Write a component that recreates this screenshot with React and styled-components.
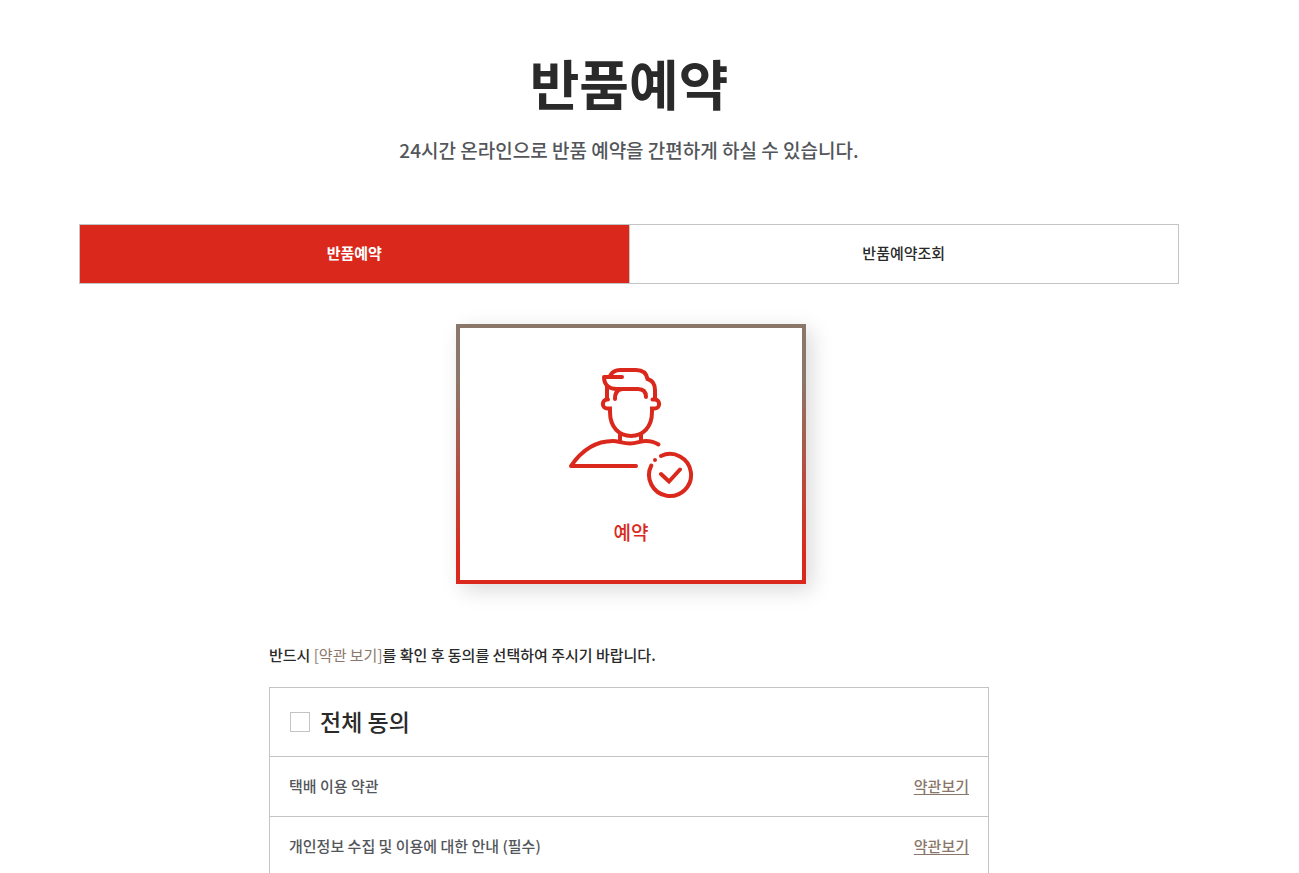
import React, { useState } from "react";
import styled, { createGlobalStyle } from "styled-components";

const red = "#da291c";
const brown = "#8b7769";
const line = "#c4c4c4";
const ink = "#2a2a2a";

const GlobalStyle = createGlobalStyle`
  *, *::before, *::after { box-sizing: border-box; }
  body {
    margin: 0;
    background: #fff;
    color: ${ink};
    font-family: "Noto Sans CJK KR", "Noto Sans", sans-serif;
    font-size: 15px;
    font-weight: 500;
    line-height: 24px;
  }
  h1, h2, p, ul { margin: 0; padding: 0; }
  button { font: inherit; cursor: pointer; }
`;

const Page = styled.main`
  padding: 43px 120px 0 79px;
`;

const Container = styled.div`
  max-width: 1100px;
  margin: 0 auto;
`;

const Heading = styled.header`
  text-align: center;
`;

const Title = styled.h1`
  font-size: 54px;
  font-weight: 700;
  line-height: 80px;
`;

const Lead = styled.p`
  margin-top: 11px;
  color: #53565a;
  font-size: 19px;
  line-height: 32px;
`;

const Tabs = styled.nav`
  display: flex;
  margin-top: 58px;
  border: 1px solid ${line};
`;

const Tab = styled.a`
  flex: 1;
  padding: 16px 0 18px;
  text-align: center;
  text-decoration: none;
  color: ${(p) => (p.$active ? "#fff" : ink)};
  background: ${(p) => (p.$active ? red : "#fff")};
  font-weight: ${(p) => (p.$active ? 700 : 500)};

  & + & { border-left: 1px solid ${line}; }
`;

const Choice = styled.div`
  display: flex;
  justify-content: center;
  padding: 40px 0 0 4px;
`;

const ChoiceCard = styled.button`
  display: flex;
  flex-direction: column;
  align-items: center;
  gap: 16px;
  width: 350px;
  height: 260px;
  padding: 38px 0 0;
  border: 4px solid;
  border-image: linear-gradient(${brown} 20%, ${red} 90%) 1;
  background: #fff;
  box-shadow: 6px 6px 20px rgba(0, 0, 0, 0.15);
  color: ${red};
  font-size: 19px;
  line-height: 32px;
`;

const Terms = styled.section`
  max-width: 720px;
  margin: 59px auto 0;
`;

const Notice = styled.p`
  em {
    color: ${brown};
    font-style: normal;
    font-weight: 400;
  }
`;

const TermsBox = styled.div`
  margin-top: 20px;
  border: 1px solid ${line};
`;

const AgreeAll = styled.label`
  display: flex;
  align-items: center;
  gap: 10px;
  height: 68px;
  padding: 0 20px;
  font-size: 23px;
  line-height: 32px;

  span { padding-bottom: 2px; }
`;

const Checkbox = styled.input`
  appearance: none;
  width: 20px;
  height: 20px;
  margin: 0;
  border: 1px solid ${line};
  background: #fff;

  &:checked { background: ${red}; border-color: ${red}; }
`;

const TermList = styled.ul`
  list-style: none;
`;

const TermRow = styled.li`
  display: flex;
  justify-content: space-between;
  align-items: center;
  height: 60px;
  padding: 0 19px 1px;
  border-top: 1px solid ${line};
  color: #53565a;
`;

const TermLink = styled.a`
  color: ${brown};
  text-decoration: underline;
  text-underline-offset: 2px;
`;

const terms = ["택배 이용 약관", "개인정보 수집 및 이용에 대한 안내 (필수)"];

function ReservationIcon() {
  return (
    <svg
      width="126"
      height="134"
      viewBox="568 366 126 134"
      fill="none"
      stroke="currentColor"
      strokeWidth="4"
      strokeLinecap="round"
      aria-hidden="true"
    >
      <path d="M622 377H604C604 384 608 389 617 389H638Q646 389 646 397" strokeLinejoin="round" />
      <path d="M610 376Q613 370 620 370H636Q646 370 647.500 379Q655 381 655 390V399" />
      <path d="M607 386V399M615 399Q615 389 623 389" />
      <path d="M608 399.500H607C601.500 399.500 601.500 408.500 607 408.500H610V412C610 427 619 436 631 436S652 427 652 412V408.500H655C660.500 408.500 660.500 399.500 655 399.500H652.500" />
      <path d="M620 435V441M641 435V441" />
      <path d="M636 466H571Q588 441 613 441C618 441 623 443.500 630 443.500S640 441 646 441Q653 441 658.500 444.500" strokeLinejoin="round" />
      <path d="M661 456A21 21 0 1 1 651.300 465.500M661 474L669 481.500L680 469.500" />
      <circle cx="655" cy="460" r="2" fill="currentColor" stroke="none" />
    </svg>
  );
}

export default function App() {
  const [agreed, setAgreed] = useState(false);

  return (
    <>
      <GlobalStyle />
      <Page>
        <Container>
          <Heading>
            <Title>반품예약</Title>
            <Lead>24시간 온라인으로 반품 예약을 간편하게 하실 수 있습니다.</Lead>
          </Heading>
          <Tabs>
            <Tab href="#reserve" $active aria-current="page">반품예약</Tab>
            <Tab href="#lookup">반품예약조회</Tab>
          </Tabs>
          <Choice>
            <ChoiceCard type="button">
              <ReservationIcon />
              <span>예약</span>
            </ChoiceCard>
          </Choice>
          <Terms>
            <Notice>
              반드시 <em>[약관 보기]</em>를 확인 후 동의를 선택하여 주시기 바랍니다.
            </Notice>
            <TermsBox>
              <AgreeAll htmlFor="agree-all">
                <Checkbox
                  id="agree-all"
                  type="checkbox"
                  checked={agreed}
                  onChange={(e) => setAgreed(e.target.checked)}
                />
                <span>전체 동의</span>
              </AgreeAll>
              <TermList>
                {terms.map((term) => (
                  <TermRow key={term}>
                    <span>{term}</span>
                    <TermLink href="#terms">약관보기</TermLink>
                  </TermRow>
                ))}
              </TermList>
            </TermsBox>
          </Terms>
        </Container>
      </Page>
    </>
  );
}
